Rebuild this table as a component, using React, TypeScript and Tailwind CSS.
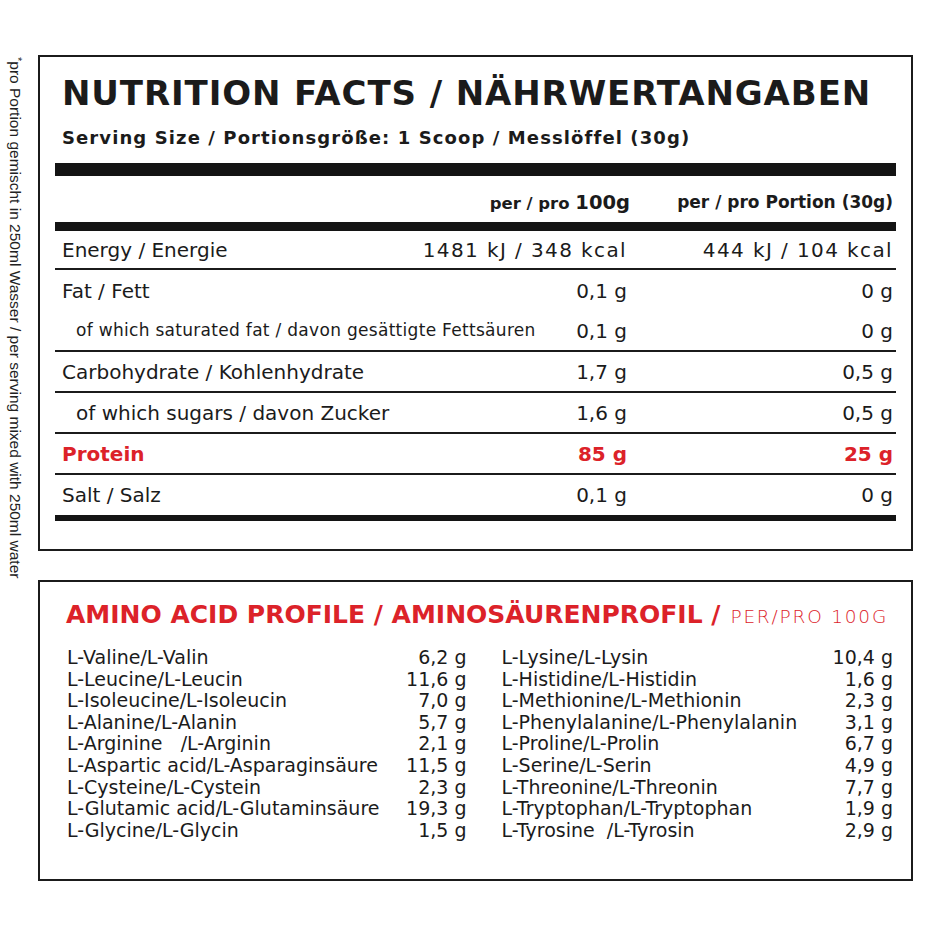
import React from "react";

const INK = "text-[#1b1b1b]";

type Row = {
  label: string;
  v1: string;
  v2: string;
  indent?: boolean;
  small?: boolean;
  red?: boolean;
  line?: "thin" | "none";
  h: string;
  wide?: boolean;
};

const rows: Row[] = [
  { label: "Energy / Energie", v1: "1481 kJ / 348 kcal", v2: "444 kJ / 104 kcal", line: "thin", h: "h-[39px]", wide: true },
  { label: "Fat / Fett", v1: "0,1 g", v2: "0 g", line: "none", h: "h-[41px]" },
  { label: "of which saturated fat / davon gesättigte Fettsäuren", v1: "0,1 g", v2: "0 g", indent: true, small: true, line: "thin", h: "h-[41px]" },
  { label: "Carbohydrate / Kohlenhydrate", v1: "1,7 g", v2: "0,5 g", line: "thin", h: "h-[41px]" },
  { label: "of which sugars / davon Zucker", v1: "1,6 g", v2: "0,5 g", indent: true, line: "thin", h: "h-[41px]" },
  { label: "Protein", v1: "85 g", v2: "25 g", red: true, line: "thin", h: "h-[41px]" },
  { label: "Salt / Salz", v1: "0,1 g", v2: "0 g", line: "none", h: "h-[40px]" },
];

const aminoLeft: [string, string][] = [
  ["L-Valine/L-Valin", "6,2 g"],
  ["L-Leucine/L-Leucin", "11,6 g"],
  ["L-Isoleucine/L-Isoleucin", "7,0 g"],
  ["L-Alanine/L-Alanin", "5,7 g"],
  ["L-Arginine\u00a0\u00a0\u00a0/L-Arginin", "2,1 g"],
  ["L-Aspartic acid/L-Asparaginsäure", "11,5 g"],
  ["L-Cysteine/L-Cystein", "2,3 g"],
  ["L-Glutamic acid/L-Glutaminsäure", "19,3 g"],
  ["L-Glycine/L-Glycin", "1,5 g"],
];

const aminoRight: [string, string][] = [
  ["L-Lysine/L-Lysin", "10,4 g"],
  ["L-Histidine/L-Histidin", "1,6 g"],
  ["L-Methionine/L-Methionin", "2,3 g"],
  ["L-Phenylalanine/L-Phenylalanin", "3,1 g"],
  ["L-Proline/L-Prolin", "6,7 g"],
  ["L-Serine/L-Serin", "4,9 g"],
  ["L-Threonine/L-Threonin", "7,7 g"],
  ["L-Tryptophan/L-Tryptophan", "1,9 g"],
  ["L-Tyrosine\u00a0\u00a0/L-Tyrosin", "2,9 g"],
];

function NutRow({ r }: { r: Row }) {
  const color = r.red ? "text-[#dc2229] font-bold" : "";
  const border = r.line === "thin" ? "border-b-2 border-[#1b1b1b]" : "";
  return (
    <div className={`flex items-center box-border ${r.h} ${border} pl-[7px] pr-[3px]`}>
      <div
        className={`flex-1 min-w-0 whitespace-nowrap ${r.indent ? "pl-[14px]" : ""} ${
          r.small ? "text-[17px] tracking-[0.3px]" : "text-[20px]"
        } ${color}`}
      >
        {r.label}
      </div>
      <div className={`w-[200px] flex justify-end whitespace-nowrap text-[20px] ${r.wide ? "tracking-[1.4px]" : ""} ${color}`}>
        {r.v1}
      </div>
      <div className={`w-[266px] flex justify-end whitespace-nowrap text-[20px] ${r.wide ? "tracking-[1.4px]" : ""} ${color}`}>
        {r.v2}
      </div>
    </div>
  );
}

function AminoCol({ items, width }: { items: [string, string][]; width: string }) {
  return (
    <div className={`${width} flex flex-col`}>
      {items.map(([n, v]) => (
        <div key={n} className="flex justify-between items-center h-[21.6px] leading-[21.6px] text-[19px] whitespace-nowrap">
          <span>{n}</span>
          <span>{v}</span>
        </div>
      ))}
    </div>
  );
}

export default function App() {
  return (
    <div className={`w-[944px] h-[944px] bg-white flex ${INK} font-['DejaVu_Sans',sans-serif] overflow-hidden`}>
      <div className="w-[30px] shrink-0 flex justify-center pt-[57px]">
        <span className="[writing-mode:vertical-rl] text-[15.5px] leading-[18px] whitespace-nowrap font-['Liberation_Sans',sans-serif] text-[#222]">
          <span className="text-[11px] relative left-[3px]">*</span>pro Portion gemischt in 250ml Wasser / per serving mixed with 250ml water
        </span>
      </div>

      <div className="ml-[8px] w-[875px] flex flex-col pt-[55px]">
        {/* Nutrition facts box */}
        <div className="h-[496px] border-2 border-[#1b1b1b] px-[15px] flex flex-col">
          <div className="pl-[7px] pt-[16px] text-[34px] leading-[40px] font-bold tracking-[0.9px] whitespace-nowrap">
            NUTRITION FACTS / NÄHRWERTANGABEN
          </div>
          <div className="pl-[7px] mt-[13px] text-[18px] leading-[24px] font-bold tracking-[1.1px] whitespace-nowrap">
            Serving Size / Portionsgröße: 1 Scoop / Messlöffel (30g)
          </div>
          <div className="mt-[13px] h-[13px] bg-[#141414]" />
          <div className="h-[46px] flex items-center pt-[8px] pr-[3px] font-bold whitespace-nowrap">
            <div className="flex-1" />
            <div className="w-[203px] -mr-[3px] flex justify-end items-baseline">
              <span className="text-[16.5px]">per / pro&nbsp;</span>
              <span className="text-[19.5px]">100g</span>
            </div>
            <div className="w-[266px] flex justify-end text-[17px]">per / pro Portion (30g)</div>
          </div>
          <div className="h-[9px] bg-[#141414]" />
          {rows.map((r) => (
            <NutRow key={r.label} r={r} />
          ))}
          <div className="h-[6px] bg-[#141414]" />
        </div>

        {/* Amino acid box */}
        <div className="mt-[29px] h-[301px] border-2 border-[#1b1b1b] pl-[27px] pr-[18px] flex flex-col">
          <div className="pt-[18px] -ml-[1px] leading-[30px] whitespace-nowrap text-[#dc2229]">
            <span className="text-[25px] font-bold">AMINO ACID PROFILE / AMINOSÄURENPROFIL /</span>
            <span className="text-[18.5px] font-extralight tracking-[1.8px] ml-[10px]">PER/PRO 100G</span>
          </div>
          <div className="mt-[14px] flex gap-x-[35px]">
            <AminoCol items={aminoLeft} width="w-[400px]" />
            <AminoCol items={aminoRight} width="w-[392px]" />
          </div>
        </div>
      </div>
    </div>
  );
}
